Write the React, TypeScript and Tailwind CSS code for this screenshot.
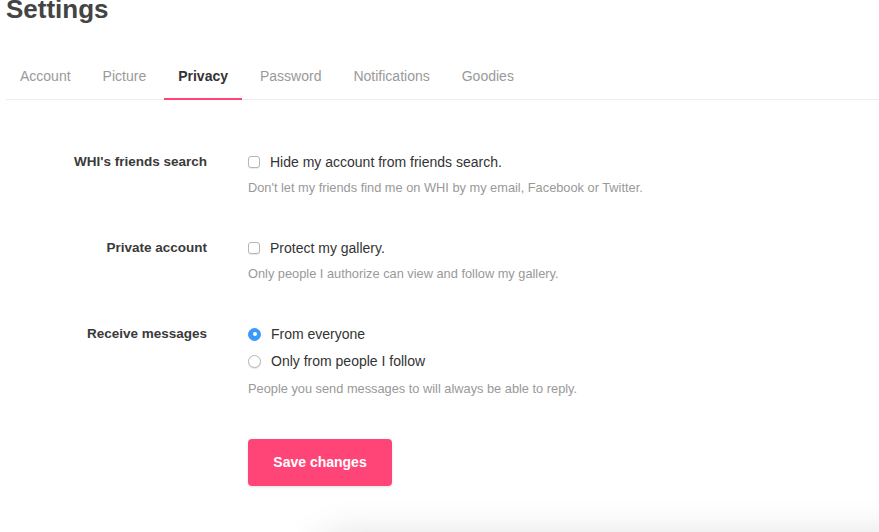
import React, { useState } from "react";

const tabs = ["Account", "Picture", "Privacy", "Password", "Notifications", "Goodies"];

const Checkbox = ({ checked, onClick }: { checked: boolean; onClick: () => void }) => (
  <span
    onClick={onClick}
    className={`inline-block w-[12px] h-[12px] rounded-[3px] border shadow-[0_1px_1px_rgba(0,0,0,0.08)] ${
      checked ? "bg-[#3b99fc] border-[#3b99fc]" : "bg-white border-[#b5b5b5]"
    }`}
  />
);

const Radio = ({ checked, onClick }: { checked: boolean; onClick: () => void }) => (
  <span
    onClick={onClick}
    className={`flex items-center justify-center w-[13px] h-[13px] rounded-full border ${
      checked
        ? "bg-[#3b99fc] border-[#3b99fc]"
        : "bg-white border-[#b5b5b5] shadow-[0_1px_1px_rgba(0,0,0,0.1)]"
    }`}
  >
    {checked && <span className="w-[4px] h-[4px] rounded-full bg-white" />}
  </span>
);

const Row = ({ label, children }: { label: string; children: React.ReactNode }) => (
  <div className="flex">
    <div className="w-[201px] text-right text-[13.5px] font-bold text-[#3a3a3a] leading-[20px]">{label}</div>
    <div className="ml-[41px] flex-1">{children}</div>
  </div>
);

export default function App() {
  const [active, setActive] = useState("Privacy");
  const [hide, setHide] = useState(false);
  const [protect, setProtect] = useState(false);
  const [msg, setMsg] = useState("everyone");

  return (
    <div
      className="relative h-[532px] w-[879px] overflow-hidden bg-white"
      style={{ fontFamily: '"Liberation Sans", Arial, sans-serif' }}
    >
      <div className="pl-[6px]">
        <h1 className="text-[26px] font-bold text-[#444] leading-[26px] -mt-[4px]">Settings</h1>

        <div className="mt-[44px] flex border-b border-[#ededed]">
          {tabs.map((t) => (
            <button
              key={t}
              onClick={() => setActive(t)}
              className={`mr-[4px] px-[14px] pb-[12px] text-[14px] leading-[20px] border-b-2 -mb-px ${
                active === t
                  ? "font-bold text-[#333] border-[#ff4577]"
                  : "text-[#999] border-transparent"
              }`}
            >
              {t}
            </button>
          ))}
        </div>

        <div className="mt-[52px] flex flex-col">
          <Row label="WHI's friends search">
            <label className="flex items-center gap-[10px] text-[14px] leading-[20px] text-[#333]">
              <Checkbox checked={hide} onClick={() => setHide(!hide)} />
              Hide my account from friends search.
            </label>
            <p className="mt-[7px] text-[12.8px] leading-[18px] text-[#999]">
              Don't let my friends find me on WHI by my email, Facebook or Twitter.
            </p>
          </Row>

          <div className="mt-[41px]">
            <Row label="Private account">
              <label className="flex items-center gap-[10px] text-[14px] leading-[20px] text-[#333]">
                <Checkbox checked={protect} onClick={() => setProtect(!protect)} />
                Protect my gallery.
              </label>
              <p className="mt-[7px] text-[12.8px] leading-[18px] text-[#999]">
                Only people I authorize can view and follow my gallery.
              </p>
            </Row>
          </div>

          <div className="mt-[41px]">
            <Row label="Receive messages">
              <label className="flex items-center gap-[10px] text-[14px] leading-[20px] text-[#333]">
                <Radio checked={msg === "everyone"} onClick={() => setMsg("everyone")} />
                From everyone
              </label>
              <label className="mt-[7px] flex items-center gap-[10px] text-[14px] leading-[20px] text-[#333]">
                <Radio checked={msg === "follow"} onClick={() => setMsg("follow")} />
                Only from people I follow
              </label>
              <p className="mt-[9px] text-[12.8px] leading-[18px] text-[#999]">
                People you send messages to will always be able to reply.
              </p>
              <button className="mt-[41px] w-[144px] h-[47px] rounded-[4px] bg-[#ff4577] text-white text-[14px] font-bold shadow-[0_1px_3px_rgba(0,0,0,0.12)]">
                Save changes
              </button>
            </Row>
          </div>
        </div>
      </div>

      <div className="absolute left-[320px] -right-[40px] top-[545px] h-[100px] rounded-[20px] bg-white shadow-[0_-8px_40px_rgba(0,0,0,0.14)]" />
    </div>
  );
}
